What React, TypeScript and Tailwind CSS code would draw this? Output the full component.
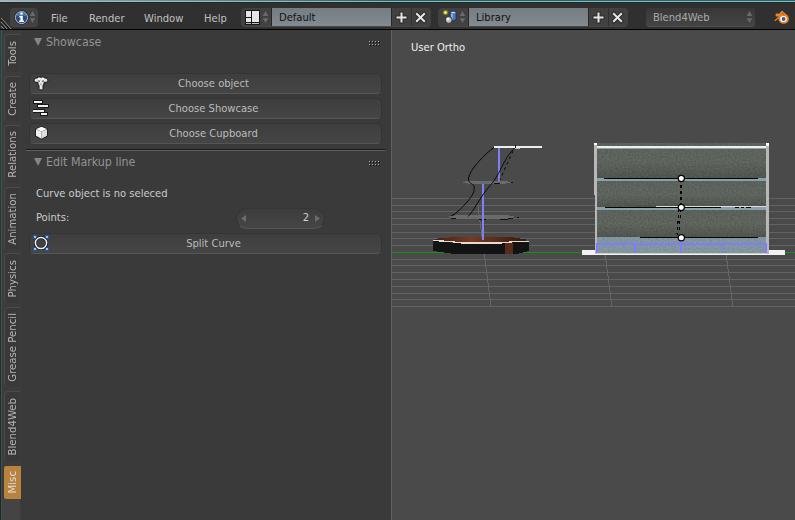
import type { ReactNode } from "react";

const tabs = [
  { name: "Tools", box: "h-[38px] mb-[4px]" },
  { name: "Create", box: "h-[45px] mb-[4px]" },
  { name: "Relations", box: "h-[58px] mb-[4px]" },
  { name: "Animation", box: "h-[62px] mb-[4px]" },
  { name: "Physics", box: "h-[50px] mb-[4px]" },
  { name: "Grease Pencil", box: "h-[80px] mb-[4px]" },
  { name: "Blend4Web", box: "h-[70px] mb-[5px]" },
];

function UpDown({ className = "" }: { className?: string }) {
  return (
    <svg className={"h-[14px] w-[7px] shrink-0 " + className} viewBox="0 0 7 14">
      <path d="M3.5 1 6.2 6H.8ZM3.5 13 6.2 8.2H.8Z" fill="#6a6a6a" />
    </svg>
  );
}

function InfoIcon() {
  return (
    <svg className="h-[15px] w-[15px] shrink-0" viewBox="0 0 15 15">
      <circle cx="7.5" cy="7.5" r="7.2" fill="#1b2330" />
      <circle cx="7.5" cy="7.5" r="6.1" fill="#29497f" stroke="#b5c1d0" strokeWidth="1" />
      <path d="M2.5 6.5a5 5 0 0 1 10 0Q7.500 4 2.500 6.500" fill="#5878a8" />
      <path d="M6.300 2.600h2.400v2H6.300zM5.300 5.800h3.500v4.700h1.200v1.600H5.200v-1.600h1.200V7.400H5.300z" fill="#fff" />
    </svg>
  );
}

function LayoutIcon() {
  return (
    <svg className="h-[15px] w-[15px] shrink-0" viewBox="0 0 15 15" shapeRendering="crispEdges">
      <path d="M0 0h15v15H0z" fill="#171717" />
      <path d="M1 1h5v6H1zM1 8h5v4H1zM7 1h7v11H7z" fill="#e6e6e6" />
      <path d="M1 13h5v1H1zM7 13h7v1H7z" fill="#bdbdbd" />
    </svg>
  );
}

function SceneIcon() {
  return (
    <svg className="h-[16px] w-[16px] shrink-0" viewBox="0 0 16 16">
      <path d="M8.200 3.500Q11 1.500 14 3v7.500q-2.500 2-5.800.500z" fill="#4478c8" stroke="#1b2c4c" strokeWidth=".6" />
      <path d="M8.700 3.700Q11 5 13.700 3.400 11 1.800 8.700 3.700" fill="#c8dcfa" />
      <path d="M9 5h1.700v5.700H9z" fill="#91b8ef" />
      <circle cx="3.500" cy="3.500" r="2.800" fill="#77732c" />
      <circle cx="3.500" cy="3.500" r="1.600" fill="#f2ec66" />
      <circle cx="6.800" cy="11" r="3.400" fill="#bcbcb9" stroke="#171717" strokeWidth=".8" />
      <circle cx="5.900" cy="10" r="1.500" fill="#f4f4f2" />
    </svg>
  );
}

function PlusButton() {
  return (
    <div className="flex h-[18px] w-[20px] items-center justify-center border-r border-[#303030] bg-[#414141]">
      <svg className="h-[13px] w-[13px]" viewBox="0 0 13 13">
        <path d="M6.500 .5v12M.5 6.500h12" stroke="#2a2a2a" strokeWidth="4" />
        <path d="M6.500 1.500v10M1.500 6.500h10" stroke="#e6e6e6" strokeWidth="2" />
      </svg>
    </div>
  );
}

function CloseButton() {
  return (
    <div className="flex h-[18px] w-[19px] items-center justify-center rounded-r bg-[#414141]">
      <svg className="mr-[2px] h-[13px] w-[13px]" viewBox="0 0 13 13">
        <path d="m1.500 1.500 10 10m0-10-10 10" stroke="#2a2a2a" strokeWidth="4" />
        <path d="m2.200 2.200 8.600 8.600m0-8.600-8.600 8.600" stroke="#e6e6e6" strokeWidth="2" />
      </svg>
    </div>
  );
}

function DataSelector({ icon, value }: { icon: ReactNode; value: string }) {
  return (
    <div className="flex h-[18px] shrink-0 rounded shadow-[0_1px_0_#484848]">
      <div className="flex w-[30px] items-center justify-between rounded-l bg-[#414141] pr-[2px] pl-[4px]">
        {icon}
        <UpDown />
      </div>
      <div className="flex h-[18px] w-[121px] items-center border-x border-[#262626] bg-gradient-to-b from-[#757d82] to-[#838b90] pt-[2px] pl-[7px] leading-[16px] text-[#111]">
        {value}
      </div>
      <PlusButton />
      <CloseButton />
    </div>
  );
}

function BlenderLogo() {
  return (
    <svg className="h-[14px] w-[16px]" viewBox="0 0 16 14">
      <path d="m.8 9.800 6-5.100H2.300V3.200h6L6.700 1.700 8 .6l6 5.100" fill="none" stroke="#e8822b" strokeWidth="1.400" strokeLinejoin="round" />
      <ellipse cx="9.700" cy="8" rx="5.200" ry="4.800" fill="#e8822b" />
      <ellipse cx="9.500" cy="8" rx="3.300" ry="3" fill="#fff" />
      <circle cx="9.600" cy="8" r="1.900" fill="#275a9e" />
    </svg>
  );
}

function Header() {
  return (
    <header className="flex h-[30px] shrink-0 flex-col border-b border-black bg-[#303030]">
      <div className="h-px bg-gradient-to-r from-[#9eb1b7] via-[#256062] to-[#23696b]" />
      <div className="h-px bg-gradient-to-r from-[#a4bbc0] via-[#8eb8ba] to-[#8bbabc]" />
      <div className="h-px bg-[#192a2b]" />
      <div className="flex h-[26px] items-start pt-[5px] leading-[20px] text-[#c0c0c0]">
        <svg className="mt-[9px] h-[12px] w-[12px] shrink-0" viewBox="0 0 12 12">
          <path d="m1 1 11 12M1 5l7 8M1 9l4 4" stroke="#929292" />
          <path d="m1 2.500 9 10M1 6.500l5 6" stroke="#111" />
        </svg>
        <div className="-ml-[2px] flex h-[18px] w-[28px] shrink-0 items-center justify-between rounded bg-[#414141] pr-[2px] pl-[4px] shadow-[0_1px_0_#484848]">
          <InfoIcon />
          <UpDown />
        </div>
        <span className="ml-[13px] w-[38px] shrink-0 pt-px">File</span>
        <span className="w-[55px] shrink-0 pt-px">Render</span>
        <span className="w-[60px] shrink-0 pt-px">Window</span>
        <span className="w-[37px] shrink-0 pt-px">Help</span>
        <DataSelector icon={<LayoutIcon />} value="Default" />
        <div className="w-[7px] shrink-0" />
        <DataSelector icon={<SceneIcon />} value="Library" />
        <div className="ml-[18px] flex h-[18px] w-[109px] shrink-0 items-center justify-between rounded bg-gradient-to-b from-[#383838] to-[#444] pr-[2px] pl-[7px] text-[#aaa] shadow-[0_1px_0_#505050]">
          <span className="pt-[2px] leading-[16px]">Blend4Web</span>
          <UpDown />
        </div>
        <div className="ml-[19px] pt-[3px]"><BlenderLogo /></div>
      </div>
    </header>
  );
}

function TabStrip() {
  return (
    <nav className="flex w-[19px] shrink-0 flex-col bg-[#3c3c3c] pt-[4px] pl-[2px] text-[#b5b5b5]">
      {tabs.map((t) => (
        <div key={t.name} className={"flex w-[16px] shrink-0 items-center justify-center rounded-l-[4px] border-t border-l border-[#4b4b4b] bg-[#393939] " + t.box}>
          <span className="rotate-180 text-[11.3px] leading-[14px] whitespace-nowrap [writing-mode:vertical-rl]">{t.name}</span>
        </div>
      ))}
      <div className="flex h-[33px] w-[17px] shrink-0 items-center justify-center rounded-l-[2px] bg-[#b8833f] text-[#ddd]">
        <span className="rotate-180 text-[11.3px] leading-[14px] [writing-mode:vertical-rl]">Misc</span>
      </div>
      <div className="-ml-[2px] w-[18px] grow bg-[#444]" />
    </nav>
  );
}

function PanelTitle({ children }: { children: ReactNode }) {
  return (
    <div className="flex h-[20px] items-center pr-[5px] pl-[6px] text-[12.3px] text-[#939393]">
      <svg className="mr-[4px] h-[8px] w-[8px]" viewBox="0 0 8 8"><path d="M0 0h8L4 8z" fill="#858585" /></svg>
      <span className="grow">{children}</span>
      <svg className="mt-[2px] h-[5px] w-[12px]" viewBox="0 0 12 5">
        <path d="M1 1.500h11M1 4.500h11" stroke="#111" strokeDasharray="1 2" />
        <path d="M0 .5h11M0 3.500h11" stroke="#aaa" strokeDasharray="1 2" />
      </svg>
    </div>
  );
}

function PanelButton({ icon, children }: { icon: ReactNode; children: ReactNode }) {
  return (
    <div className="flex h-[21px] w-[353px] items-center rounded-[5px] border border-[#343434] border-b-[#555] bg-gradient-to-b from-[#3e3e3e] to-[#454545]">
      <div className="w-[16px] shrink-0 pl-[3px]">{icon}</div>
      <span className="grow text-center leading-[19px] text-[#bcbcbc]">{children}</span>
    </div>
  );
}

function MonkeyIcon() {
  return (
    <svg className="mb-[2px] h-[16px] w-[16px]" viewBox="0 0 16 16">
      <path d="M.8 5 2.600 3h2l1.200-1.300L8 2.300l2.200-.6L11.400 3h2l1.800 2-1.500 2.400-2.500-.2-.4 2.400-.8.700v3.200L8.600 15H7.400L6 13.500v-3.200l-.8-.7-.4-2.400-2.500.2z" fill="#e5e5e5" stroke="#151515" strokeWidth="1" />
      <path d="M5 5.500h2v1.200H5zM9 5.500h2v1.200H9zM7.200 8.700h1.600v.8H7.200z" fill="#666" />
      <path d="M5 3.800h2M9 3.800h2M7.500 12.500h1" stroke="#fff" />
    </svg>
  );
}

function StepsIcon() {
  return (
    <svg className="mb-[2px] h-[16px] w-[16px]" viewBox="0 0 16 16" shapeRendering="crispEdges">
      <path d="M0 0h10v4H0zM4 4h12v4H4zM0 9h12v4H0zM7 12h8v4H7z" fill="#171717" />
      <path d="M1 1h8v2H1zM5 5h10v2H5zM0 10h11v2H0zM8 13h6v2H8z" fill="#eee" />
    </svg>
  );
}

function CubeIcon() {
  return (
    <svg className="mb-[2px] h-[16px] w-[16px]" viewBox="0 0 16 16">
      <path d="m8.500 1 6.300 2.800v7.400l-6.300 3.300-6.300-3.300V3.800z" fill="#1a1a1a" />
      <path d="m8.500 1.700 5.300 2.400-5.300 2.600-5.300-2.600z" fill="#fff" />
      <path d="M3 4.200 8.500 6.700v7.100L3 10.800z" fill="#f0f0f0" />
      <path d="M8.500 6.700 14 4.200v6.600l-5.500 3z" fill="#dedede" />
    </svg>
  );
}

function CurveIcon() {
  return (
    <svg className="mb-[2px] h-[16px] w-[16px]" viewBox="0 0 16 16">
      <circle cx="8" cy="8" r="5.600" fill="none" stroke="#191919" strokeWidth="3" />
      <circle cx="8" cy="8" r="5.600" fill="none" stroke="#eee" strokeWidth="1.500" />
      <path d="M0 0h4v4H0zM12 0h4v4h-4zM0 12h4v4H0zM12 12h4v4h-4z" fill="#23529e" />
      <path d="M1 1h2v2H1zM13 1h2v2h-2zM1 13h2v2H1zM13 13h2v2h-2z" fill="#9fc0ee" />
    </svg>
  );
}

function ToolPanel() {
  return (
    <section className="flex w-[370px] shrink-0 flex-col bg-[#3a3a3a] pt-[2px] pl-[7px]">
      <div className="w-[358px]"><PanelTitle>Showcase</PanelTitle></div>
      <div className="mt-[21px] flex flex-col gap-[4px] pl-px">
        <PanelButton icon={<MonkeyIcon />}>Choose object</PanelButton>
        <PanelButton icon={<StepsIcon />}>Choose Showcase</PanelButton>
        <PanelButton icon={<CubeIcon />}>Choose Cupboard</PanelButton>
      </div>
      <div className="mt-[5px] -ml-[2px] h-[2px] w-[359px] border-t border-[#1a1a1a] bg-[#606060]" />
      <div className="mt-px w-[358px]"><PanelTitle>Edit Markup line</PanelTitle></div>
      <p className="mt-[12px] h-[20px] pl-[8px] leading-[20px] text-[#cacaca]">Curve object is no seleced</p>
      <div className="mt-[4px] flex h-[21px] items-center pl-[8px]">
        <span className="w-[200px] text-[#cacaca]">Points:</span>
        <div className="flex h-[21px] w-[89px] items-center rounded-full border border-[#353535] border-b-[#555] bg-gradient-to-b from-[#3c3c3c] to-[#464646] px-[4px] text-[#d0d0d0]">
          <svg className="h-[7px] w-[5px]" viewBox="0 0 5 7"><path d="M5 0v7L0 3.500z" fill="#6c6c6c" /></svg>
          <span className="grow pr-[6px] text-right">2</span>
          <svg className="h-[7px] w-[5px]" viewBox="0 0 5 7"><path d="M0 0v7l5-3.500z" fill="#6c6c6c" /></svg>
        </div>
      </div>
      <div className="mt-[4px] pl-px"><PanelButton icon={<CurveIcon />}>Split Curve</PanelButton></div>
    </section>
  );
}

const gridRows = [198, 205, 211, 218, 224, 232, 238, 245, 259, 265, 272, 279, 286, 293, 299, 306];

function Scene() {
  return (
    <svg className="block h-[490px] w-[403px]" viewBox="392 30 403 490" shapeRendering="crispEdges">
      <defs>
        <filter id="grain" x="0" y="0" width="1" height="1" colorInterpolationFilters="sRGB">
          <feTurbulence type="fractalNoise" baseFrequency=".6" numOctaves="2" seed="4" />
          <feColorMatrix values="0.8 0 0 0 0 0.8 0 0 0 0 0.8 0 0 0 0 0 0 0 0 .15" />
          <feComposite operator="in" in2="SourceGraphic" />
          <feBlend in2="SourceGraphic" mode="normal" />
        </filter>
        <linearGradient id="wall" x1="0" y1="0" x2="0" y2="1">
          <stop offset="0" stopColor="#586058" />
          <stop offset=".5" stopColor="#5d645c" />
          <stop offset="1" stopColor="#4b514a" />
        </linearGradient>
        <linearGradient id="wood" x1="0" y1="0" x2="1" y2="0">
          <stop offset="0" stopColor="#422017" />
          <stop offset=".4" stopColor="#783921" />
          <stop offset="1" stopColor="#36180f" />
        </linearGradient>
      </defs>

      {/* floor grid and the horizon axis */}
      {gridRows.map((y) => <rect key={y} x="392" y={y} width="403" height="1" fill="#626262" />)}
      <path d="m478 206 13 100M605 254l7 52M726 254l7 52" stroke="#666" fill="none" />
      <rect x="392" y="252" width="403" height="1" fill="#149014" />

      {/* round display stand */}
      <path d="M460 182 470 181h33l10 1-9 2h-33zM446 217l12-2h48l11 2-14 2h-42z" fill="#6b6b6b" />
      <path d="M494 183.500h6m11-1h2M451 218.500h5m23 .5h7m14 .5h8m0-1h5m4-1h2" stroke="#111" fill="none" />
      <path d="M433 241h96v10l-12 3h-63l-21-3z" fill="#131313" />
      <path d="M505 243h8v11h-8z" fill="#572a1b" />
      <path d="m433 240 7-2 18-1h53l18 3-12 2-30 2-34-1z" fill="url(#wood)" />
      <path d="m433 240.500 17 1 12 1.500h39l14-1.500h14" fill="none" stroke="#e5ddcf" strokeWidth="1.300" />
      <path d="M482 184h2v56h-2zM498 148h2v33h-2z" fill="#817ff5" />
      <g fill="none" stroke="#080808" shapeRendering="geometricPrecision">
        <path d="M494 147.500C486 153 470 169 468.500 178c-.5 6 4 5 5.500 8 1 5-1 9-7 16-5 6-10 11-16 14" />
        <path d="M515 147.500c-6 6-8 10-12 17-4 8-8 16-13 21-6 7-10 14-14 20-3 5-5 8-8 11" />
        <path d="M513 151c-4 9-8 17-13 29" strokeDasharray="3 3" />
      </g>
      <path d="M494 146h48v1.500h-48z" fill="#eee" />
      <path d="M515 145h1v3h-1z" fill="#171717" />
      <path d="M515 148h5v1h-5z" fill="#bbb" />

      {/* shelved cupboard */}
      <path d="M582 250h203v5H582z" fill="#f2f2f2" />
      <path d="M596 143h171v111H596z" fill="#859da8" filter="url(#grain)" />
      <g filter="url(#grain)">
        <path d="M597 143h169v35H597z" fill="url(#wall)" />
        <path d="M597 181h169v26H597z" fill="url(#wall)" />
        <path d="M597 210h169v27H597z" fill="url(#wall)" />
      </g>
      <path d="M596 178h170v3H596zM596 207h170v3H596z" fill="#8ba0ad" />
      <path d="M597 146h169v2H597z" fill="#eee" />
      <path d="M597 148h169v1H597z" fill="#8ca1aa" />
      <path d="M594 143h3v111h-2v-59h-1zM766 143h3v111h-3z" fill="#b8b8b8" />
      <path d="M594 143h3v2h-3zM766 143h3v3h-3z" fill="#fff" />
      <path d="M656 206h110v1H656z" fill="#ddd" />
      <path d="M604 178h154v1H604zM605 207h116v1H605zM735 207h4v1h-4zM741 207h3v1h-3zM746 207h5v1h-5zM640 237h118v1H640z" fill="#050505" />
      <path d="M596 243h171v2H596zM596 244h2v9H596zM634 245h2v8h-2zM680 245h2v8H680zM722 245h1v8h-1zM765 244h2v9h-2z" fill="#7f7dfb" />
      <path d="M596 253h171v1H596z" fill="#ccc" />
      <path d="M681 179v28l-2 26M679 209l-2 25 4 4" fill="none" stroke="#050505" strokeWidth="1.200" strokeDasharray="3 3" />
      {[178.500, 207.500, 237.700].map((y) => (
        <circle key={y} cx="681.300" cy={y} r="3.100" fill="#fff" stroke="#050505" strokeWidth="1.200" shapeRendering="geometricPrecision" />
      ))}
    </svg>
  );
}

export default function App() {
  return (
    <div className="flex h-[520px] w-[795px] flex-col overflow-hidden bg-[#3a3a3a] font-['DejaVu_Sans_Condensed','DejaVu_Sans',sans-serif] text-[11.1px] [font-stretch:condensed]">
      <Header />
      <main className="flex min-h-0 grow">
        <div className="w-[2px] shrink-0 border-r border-[#4c4c4c] bg-gradient-to-b from-[#1a4a49] to-[#172a2c]" />
        <TabStrip />
        <ToolPanel />
        <section className="relative w-[404px] shrink-0 border-l border-[#606060] bg-[#4a4a4a]">
          <span className="absolute top-[10px] left-[19px] leading-[15px] text-[#f1f1f1]">User Ortho</span>
          <Scene />
        </section>
      </main>
    </div>
  );
}
